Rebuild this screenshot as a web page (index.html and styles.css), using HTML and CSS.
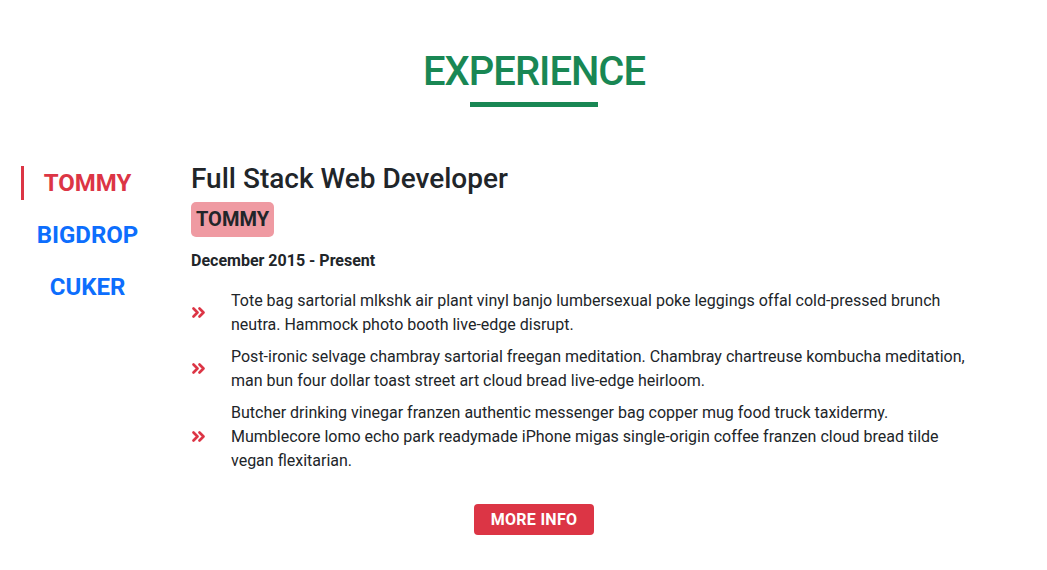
FILE: index.html
```html
<!DOCTYPE html>
<html lang="en">
<head>
<meta charset="utf-8">
<title>Experience</title>
<link rel="stylesheet" href="styles.css">
</head>
<body>
<section class="experience">
  <header class="section-head">
    <h2 class="section-title">EXPERIENCE</h2>
    <div class="section-bar"></div>
  </header>
  <div class="exp-row">
    <nav class="exp-tabs">
      <a class="exp-tab active" href="#">TOMMY</a>
      <a class="exp-tab" href="#">BIGDROP</a>
      <a class="exp-tab" href="#">CUKER</a>
    </nav>
    <div class="exp-body">
      <h3 class="job-title">Full Stack Web Developer</h3>
      <span class="company-badge">TOMMY</span>
      <h6 class="job-date">December 2015 - Present</h6>
      <ul class="duties">
        <li class="duty">
          <span class="duty-icon"><svg viewBox="0 0 14 11" width="14" height="11"><path d="M1.5 1.5 L5.5 5.5 L1.5 9.5 M7.5 1.5 L11.5 5.5 L7.5 9.5" fill="none" stroke="#dc3545" stroke-width="2.6" stroke-linecap="round" stroke-linejoin="round"/></svg></span>
          <p class="duty-text">Tote bag sartorial mlkshk air plant vinyl banjo lumbersexual poke leggings offal cold-pressed brunch neutra. Hammock photo booth live-edge disrupt.</p>
        </li>
        <li class="duty">
          <span class="duty-icon"><svg viewBox="0 0 14 11" width="14" height="11"><path d="M1.5 1.5 L5.5 5.5 L1.5 9.5 M7.5 1.5 L11.5 5.5 L7.5 9.5" fill="none" stroke="#dc3545" stroke-width="2.6" stroke-linecap="round" stroke-linejoin="round"/></svg></span>
          <p class="duty-text">Post-ironic selvage chambray sartorial freegan meditation. Chambray chartreuse kombucha meditation, man bun four dollar toast street art cloud bread live-edge heirloom.</p>
        </li>
        <li class="duty">
          <span class="duty-icon"><svg viewBox="0 0 14 11" width="14" height="11"><path d="M1.5 1.5 L5.5 5.5 L1.5 9.5 M7.5 1.5 L11.5 5.5 L7.5 9.5" fill="none" stroke="#dc3545" stroke-width="2.6" stroke-linecap="round" stroke-linejoin="round"/></svg></span>
          <p class="duty-text">Butcher drinking vinegar franzen authentic messenger bag copper mug food truck taxidermy. Mumblecore lomo echo park readymade iPhone migas single-origin coffee franzen cloud bread tilde vegan flexitarian.</p>
        </li>
      </ul>
    </div>
  </div>
  <div class="more-wrap">
    <button class="more-btn" type="button">MORE INFO</button>
  </div>
</section>
</body>
</html>
```
FILE: styles.css
```css
* { box-sizing: border-box; }
body {
  margin: 0;
  font-family: Roboto, "Noto Sans", sans-serif;
  color: #212529;
  background: #fff;
  font-size: 16px;
  line-height: 1.5;
}
.experience {
  padding: 48px 0 0 21px;
}
.section-head {
  display: flex;
  flex-direction: column;
  align-items: center;
}
.section-title {
  margin: 0;
  font-size: 40px;
  font-weight: 500;
  line-height: 1.2;
  letter-spacing: -1px;
  color: #198754;
}
.section-bar {
  width: 128px;
  height: 5px;
  margin-top: 6px;
  background: #198754;
}
.exp-row {
  display: flex;
  margin-top: 55px;
  gap: 40px;
}
.exp-tabs {
  width: 130px;
  flex: none;
  display: flex;
  flex-direction: column;
  gap: 18px;
  padding-top: 4px;
}
.exp-tab {
  display: block;
  height: 34px;
  line-height: 34px;
  text-align: center;
  font-size: 24px;
  font-weight: 700;
  color: #0d6efd;
  text-decoration: none;
  border-left: 3px solid transparent;
}
.exp-tab.active {
  color: #dc3545;
  border-left-color: #dc3545;
}
.exp-body {
  width: 780px;
}
.job-title {
  margin: 0;
  font-size: 28px;
  font-weight: 500;
  line-height: 1.2;
}
.company-badge {
  display: inline-block;
  margin-top: 6px;
  padding: 2px 5px;
  line-height: 31px;
  font-size: 20px;
  font-weight: 700;
  background: #ef9aa2;
  border-radius: 5px;
}
.job-date {
  margin: 13px 0 0;
  font-size: 16px;
  font-weight: 700;
  line-height: 22px;
}
.duties {
  list-style: none;
  margin: 17px 0 0;
  padding: 0;
  display: flex;
  flex-direction: column;
  gap: 8px;
}
.duty {
  display: flex;
  align-items: center;
}
.duty-icon {
  width: 40px;
  flex: none;
  display: flex;
  padding-left: 1px;
}
.duty-text {
  margin: 0;
}
.more-wrap {
  display: flex;
  justify-content: center;
  margin-top: 31px;
}
.more-btn {
  font-family: inherit;
  font-size: 16px;
  font-weight: 700;
  letter-spacing: 0.3px;
  color: #fff;
  background: #dc3545;
  border: none;
  border-radius: 4px;
  width: 120px;
  height: 31px;
  padding: 0;
}
```
